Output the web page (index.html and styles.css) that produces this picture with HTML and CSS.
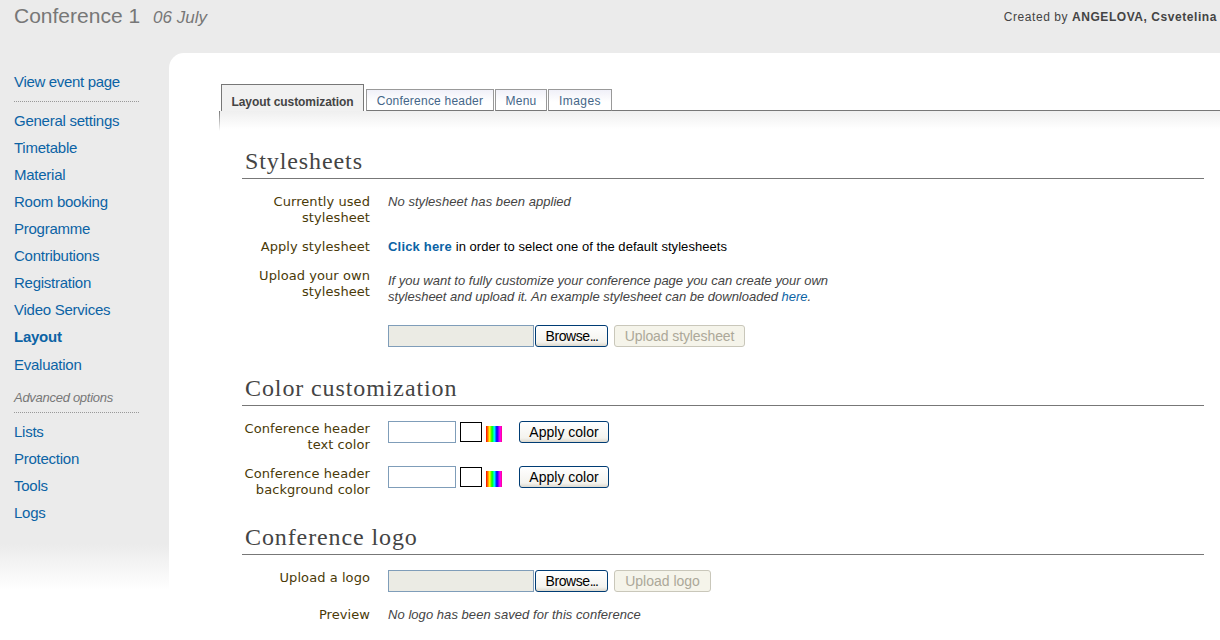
FILE: index.html
```html
<!DOCTYPE html>
<html lang="en">
<head>
<meta charset="utf-8">
<title>Conference 1 - Layout</title>
<link rel="stylesheet" href="styles.css">
</head>
<body>
<div class="page">
  <header class="header">
    <div class="title">Conference 1<span class="date">06 July</span></div>
    <div class="creator">Created by <b>ANGELOVA, Csvetelina</b></div>
  </header>
  <div class="columns">
    <nav class="sidebar">
      <a class="item first">View event page</a>
      <div class="rule"></div>
      <a class="item">General settings</a>
      <a class="item">Timetable</a>
      <a class="item">Material</a>
      <a class="item">Room booking</a>
      <a class="item">Programme</a>
      <a class="item">Contributions</a>
      <a class="item">Registration</a>
      <a class="item">Video Services</a>
      <a class="item current">Layout</a>
      <a class="item">Evaluation</a>
      <div class="section">Advanced options</div>
      <div class="rule advanced"></div>
      <a class="item">Lists</a>
      <a class="item">Protection</a>
      <a class="item">Tools</a>
      <a class="item">Logs</a>
    </nav>
    <main class="main">
      <div class="tabs">
        <div class="tab active">Layout customization</div>
        <div class="tab header-tab">Conference header</div>
        <div class="tab menu-tab">Menu</div>
        <div class="tab images-tab">Images</div>
      </div>
      <div class="panel">
        <h2 class="heading">Stylesheets</h2>
        <div class="row current-style">
          <div class="label">Currently used<br>stylesheet</div>
          <div class="value note">No stylesheet has been applied</div>
        </div>
        <div class="row apply-style">
          <div class="label">Apply stylesheet</div>
          <div class="value"><a class="strong-link">Click here</a> in order to select one of the default stylesheets</div>
        </div>
        <div class="row upload-style">
          <div class="label">Upload your own<br>stylesheet</div>
          <div class="value">
            <div class="note help">If you want to fully customize your conference page you can create your own<br>stylesheet and upload it. An example stylesheet can be downloaded <a class="link">here</a>.</div>
            <div class="controls">
              <div class="file"></div><div class="button browse">Browse<span class="dots">...</span></div>
              <div class="button disabled upload">Upload stylesheet</div>
            </div>
          </div>
        </div>
        <h2 class="heading second">Color customization</h2>
        <div class="row color">
          <div class="label">Conference header<br>text color</div>
          <div class="controls">
            <div class="field"></div><div class="swatch"></div><div class="rainbow"></div>
            <div class="button apply">Apply color</div>
          </div>
        </div>
        <div class="row color">
          <div class="label">Conference header<br>background color</div>
          <div class="controls">
            <div class="field"></div><div class="swatch"></div><div class="rainbow"></div>
            <div class="button apply">Apply color</div>
          </div>
        </div>
        <h2 class="heading third">Conference logo</h2>
        <div class="row logo">
          <div class="label">Upload a logo</div>
          <div class="controls">
            <div class="file"></div><div class="button browse">Browse<span class="dots">...</span></div>
            <div class="button disabled upload-logo">Upload logo</div>
          </div>
        </div>
        <div class="row preview">
          <div class="label">Preview</div>
          <div class="value note">No logo has been saved for this conference</div>
        </div>
      </div>
    </main>
  </div>
</div>
</body>
</html>
```
FILE: styles.css
```css
* { box-sizing: border-box; }
body {
  margin: 0;
  background: #fff;
  color: #000;
  font: 13px/16px "Liberation Sans", Arial, sans-serif;
  overflow: hidden;
}
.page {
  height: 640px;
  background: linear-gradient(#ebebeb 544px, #fff 590px);
}
.header {
  height: 53px;
  display: flex;
  justify-content: space-between;
  align-items: flex-start;
  padding: 4px 3px 0 14px;
}
.title { font-size: 21px; line-height: 24px; color: #777; white-space: nowrap; }
.date { margin-left: 13px; font-size: 17px; font-style: italic; color: #777; }
.creator { margin-top: 5px; font-size: 12px; letter-spacing: .56px; color: #444; white-space: nowrap; }
.columns { display: flex; height: 587px; }
.sidebar { width: 169px; flex: none; padding: 15px 30px 0 14px; color: #0b63a5; }
.item { display: block; height: 27px; line-height: 27px; font-size: 15px; letter-spacing: -.25px; white-space: nowrap; }
.item.first { letter-spacing: -.33px; }
.current { height: 28px; font-weight: bold; }
.rule {
  height: 1px;
  margin: 6px 0 5px;
  background: repeating-linear-gradient(90deg, #999 0 1px, transparent 1px 2px);
}
.section { height: 33px; padding-top: 11px; font-size: 13px; line-height: 17px; letter-spacing: -.28px; font-style: italic; color: #777; white-space: nowrap; }
.rule.advanced { margin: 1px 0 5px; }
.main {
  flex: 1;
  min-width: 0;
  background: #fff;
  border-top-left-radius: 15px;
  padding: 31px 0 0 50px;
}
.tabs { display: flex; align-items: flex-end; height: 27px; padding-left: 2px; }
.tab {
  height: 22px;
  margin-right: 1px;
  border: 1px solid #999;
  background: linear-gradient(#f0f0f8, #fff 60%);
  border-bottom-color: #777;
  color: #446688;
  font-size: 12px;
  line-height: 23px;
  letter-spacing: .22px;
  text-align: center;
  white-space: nowrap;
}
.tab.active {
  width: 143px;
  height: 27px;
  margin-right: 2px;
  border-color: #777;
  border-bottom: 0;
  background: #f1f1f1;
  color: #444;
  font-weight: bold;
  line-height: 34px;
  letter-spacing: -.06px;
}
.header-tab { width: 128px; }
.menu-tab { width: 52px; }
.images-tab { width: 64px; letter-spacing: .4px; }
.tabs::after { content: ""; flex: 1; height: 1px; margin-left: -1px; background: #777; }
.panel {
  height: 529px;
  padding: 36px 16px 0 23px;
  background:
    linear-gradient(#777, #fff) 0 0 / 1px 20px no-repeat,
    linear-gradient(#efefef, #fff) 0 0 / 100% 18px no-repeat;
}
.heading {
  margin: 0;
  height: 32px;
  padding-left: 3px;
  border-bottom: 1px solid #777;
  font: 24px/28px "Liberation Serif", "Times New Roman", serif;
  letter-spacing: .9px;
  color: #444;
}
.row { display: grid; grid-template-columns: 128px 1fr; column-gap: 18px; }
.label {
  text-align: right;
  font-family: "DejaVu Sans", Verdana, sans-serif;
  letter-spacing: .07px;
  color: #4a3a08;
  white-space: nowrap;
}
.value { letter-spacing: .05px; white-space: nowrap; }
.note { font-style: italic; color: #444; }
.current-style { margin-top: 15px; height: 45px; }
.apply-style { height: 29px; }
.strong-link { font-weight: bold; letter-spacing: .19px; color: #0b63a5; }
.link { color: #0b63a5; }
.upload-style { height: 98px; }
.help { padding-top: 5px; height: 57px; letter-spacing: -.01px; }
.controls { display: flex; align-items: flex-start; }
.file { width: 146px; height: 22px; border: 1px solid #7f9db9; background: #ebebe4; }
.button {
  height: 22px;
  border: 1px solid #003c74;
  border-radius: 3px;
  background: linear-gradient(#fff, #f4f3ee 80%, #dcd8cd);
  font-size: 14px;
  line-height: 21px;
  text-align: center;
  white-space: nowrap;
  letter-spacing: 0;
}
.browse { width: 73px; margin-left: 1px; letter-spacing: -.4px; }
.dots { letter-spacing: -1.3px; }
.disabled { margin-left: 6px; border-color: #c9c7ba; background: #f5f4ea; color: #aca899; }
.upload { width: 131px; letter-spacing: -.1px; }
.upload-logo { width: 97px; }
.second { height: 31px; margin-top: 9px; line-height: 26px; }
.color { height: 45px; }
.second + .color { margin-top: 15px; }
.field { width: 68px; height: 22px; border: 1px solid #7f9db9; background: #fff; }
.swatch { width: 22px; height: 20px; margin: 1px 0 0 4px; border: 1px solid #000; background: #fff; }
.rainbow {
  width: 16px;
  height: 16px;
  margin: 5px 17px 0 4px;
  background: linear-gradient(90deg, #f00 0, #ff8000 12%, #ff0 23%, #0f0 38%, #0ff 52%, #00f 68%, #f0f 87%, #f08 100%);
}
.apply { width: 90px; }
.third { margin-top: 12px; }
.logo { margin-top: 15px; height: 37px; }
```
